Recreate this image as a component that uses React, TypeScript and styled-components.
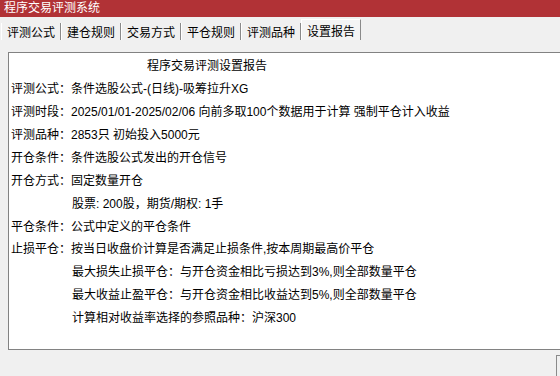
import styled, { createGlobalStyle } from "styled-components"

const GlobalStyle = createGlobalStyle`
  html, body {
    margin: 0;
    padding: 0;
    width: 560px;
    height: 376px;
    overflow: hidden;
    background: #f0f0f0;
    font-family: "Liberation Sans", "Noto Sans CJK SC", sans-serif;
    font-size: 12px;
    color: #000;
  }
`

const Window = styled.div`
  width: 560px;
  height: 376px;
  display: flex;
  flex-direction: column;
  overflow: hidden;
  background: #f0f0f0;
`

const TitleBar = styled.div`
  height: 17px;
  line-height: 16px;
  padding-left: 4px;
  background: #b13236;
  color: #fff;
  font-size: 12px;
`

const TabBar = styled.div`
  display: flex;
  align-items: flex-end;
  height: 21px;
  margin-top: 2px;
  padding-left: 1px;
`

const Tab = styled.div<{ $active?: boolean }>`
  box-sizing: border-box;
  width: 60px;
  height: ${({ $active }) => ($active ? 21 : 17)}px;
  padding-top: ${({ $active }) => ($active ? 5 : 3)}px;
  line-height: 14px;
  text-align: center;
  border-left: 1px solid #fff;
  border-right: 1px solid #8a8a8a;
  border-top: ${({ $active }) => ($active ? "1px solid #fff" : "none")};
  background: ${({ $active }) => ($active ? "#f4f4f4" : "transparent")};
  white-space: nowrap;
`

const Panel = styled.div`
  box-sizing: border-box;
  width: 560px;
  height: 305px;
  margin: 12px 0 0 8px;
  padding: 2px 0 0 2px;
  background: #fff;
  border: 1px solid #828282;
  border-right: none;
`

const ReportTitle = styled.div`
  width: 392px;
  line-height: 22.85px;
  margin-bottom: 1px;
  text-align: center;
`

const Line = styled.div<{ $indent?: boolean }>`
  line-height: 22.85px;
  padding-left: ${({ $indent }) => ($indent ? 61 : 0)}px;
  white-space: nowrap;
`

const Footer = styled.div`
  display: flex;
  justify-content: flex-end;
  padding-top: 5px;
`

const Corner = styled.div`
  width: 10px;
  height: 20px;
  margin-right: -7px;
  border-top: 1px solid #8a8a8a;
  border-left: 1px solid #8a8a8a;
`

const tabs = ["评测公式", "建仓规则", "交易方式", "平仓规则", "评测品种", "设置报告"]

const lines: { text: string; indent?: boolean }[] = [
  { text: "评测公式：条件选股公式-(日线)-吸筹拉升XG" },
  { text: "评测时段：2025/01/01-2025/02/06 向前多取100个数据用于计算 强制平仓计入收益" },
  { text: "评测品种：2853只 初始投入5000元" },
  { text: "开仓条件：条件选股公式发出的开仓信号" },
  { text: "开仓方式：固定数量开仓" },
  { text: "股票: 200股，期货/期权: 1手", indent: true },
  { text: "平仓条件：公式中定义的平仓条件" },
  { text: "止损平仓：按当日收盘价计算是否满足止损条件,按本周期最高价平仓" },
  { text: "最大损失止损平仓：与开仓资金相比亏损达到3%,则全部数量平仓", indent: true },
  { text: "最大收益止盈平仓：与开仓资金相比收益达到5%,则全部数量平仓", indent: true },
  { text: "计算相对收益率选择的参照品种：沪深300", indent: true },
]

export default function App() {
  return (
    <Window>
      <GlobalStyle />
      <TitleBar>程序交易评测系统</TitleBar>
      <TabBar>
        {tabs.map((t, i) => (
          <Tab key={t} $active={i === tabs.length - 1}>
            {t}
          </Tab>
        ))}
      </TabBar>
      <Panel>
        <ReportTitle>程序交易评测设置报告</ReportTitle>
        {lines.map((l, i) => (
          <Line key={i} $indent={l.indent}>
            {l.text}
          </Line>
        ))}
      </Panel>
      <Footer>
        <Corner />
      </Footer>
    </Window>
  )
}
